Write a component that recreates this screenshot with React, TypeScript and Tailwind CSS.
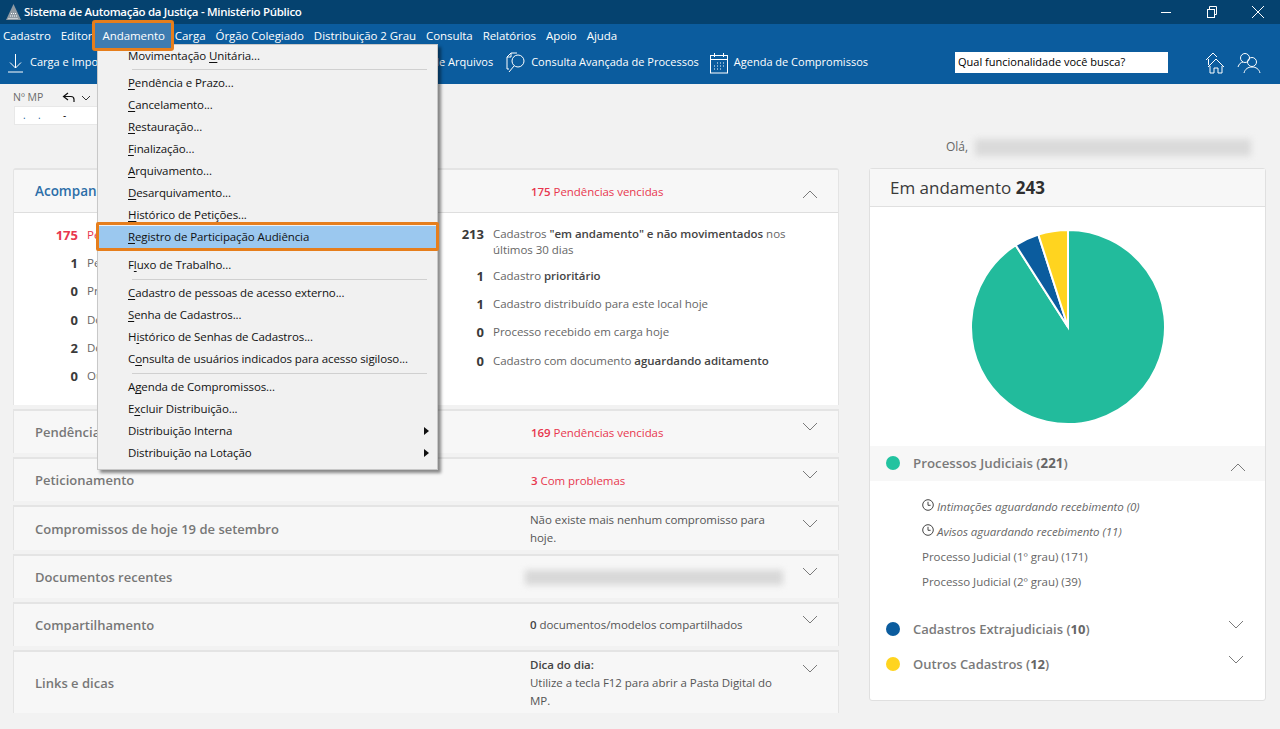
import React from "react";

const menu: (string | [string, string, string, boolean?])[] = [
  ["Movimentação ", "U", "nitária..."],
  "sep1",
  ["", "P", "endência e Prazo..."],
  ["", "C", "ancelamento..."],
  ["", "R", "estauração..."],
  ["", "F", "inalização..."],
  ["", "A", "rquivamento..."],
  ["", "D", "esarquivamento..."],
  ["", "H", "istórico de Petições..."],
  ["", "R", "egistro de Participação Audiência"],
  "gap",
  ["F", "l", "uxo de Trabalho..."],
  "sep",
  ["", "C", "adastro de pessoas de acesso externo..."],
  ["", "S", "enha de Cadastros..."],
  ["H", "i", "stórico de Senhas de Cadastros..."],
  ["C", "o", "nsulta de usuários indicados para acesso sigiloso..."],
  "sep",
  ["A", "g", "enda de Compromissos..."],
  ["E", "x", "cluir Distribuição..."],
  ["Distribuição Interna", "", "", true],
  ["Distribuição na Lotação", "", "", true],
];

const FONT = "font-['Open_Sans','Noto_Sans',sans-serif]";

function Chevron({ up = false, className = "" }: { up?: boolean; className?: string }) {
  return (
    <svg width="16" height="9" viewBox="0 0 16 9" fill="none" stroke="#7a7a7a" strokeWidth="1" className={className}>
      <polyline points={up ? "1,8 8,1 15,8" : "1,1 8,8 15,1"} />
    </svg>
  );
}

function CollapsedCard({ title, h, chevronTop, titleClass, children }: { title: string; h: string; chevronTop: string; titleClass: string; children: React.ReactNode }) {
  return (
    <div className={`${h} flex items-center bg-[#f7f7f7] border-x border-t-2 border-[#e4e4e4] pl-[21px]`}>
      <div className={`w-[495px] shrink-0 text-[13px] font-semibold text-[#777] ${titleClass}`}>{title}</div>
      <div className="w-[255px] shrink-0 text-[11.500px] tracking-[-0.05px] leading-[18px] text-[#555]">{children}</div>
      <Chevron className={`${chevronTop} self-start ml-[17px]`} />
    </div>
  );
}

function Stat({ n, red = false, h, children }: { n: string; red?: boolean; h: string; children: React.ReactNode }) {
  return (
    <div className={`${h} flex items-start`}>
      <div className={`w-[64px] shrink-0 text-right text-[13px] font-bold ${red ? "text-[#e8374f]" : "text-[#3a3a3a]"}`}>{n}</div>
      <div className={`ml-[9px] text-[11.500px] leading-[16px] pt-[1px] ${red ? "text-[#e8374f]" : "text-[#666]"}`}>{children}</div>
    </div>
  );
}

function StatR({ n, h, children }: { n: string; h: string; children: React.ReactNode }) {
  return (
    <div className={`${h} flex items-start`}>
      <div className="w-[35px] shrink-0 text-right text-[13px] font-bold text-[#3a3a3a]">{n}</div>
      <div className="ml-[9px] w-[305px] text-[11.500px] tracking-[-0.03px] leading-[16px] pt-[1px] text-[#666]">{children}</div>
    </div>
  );
}

function ClockIcon() {
  return (
    <svg width="12" height="12" viewBox="0 0 12 12" fill="none" stroke="#444" strokeWidth="1" className="shrink-0 -mt-[3px]">
      <circle cx="6" cy="6" r="5.300" />
      <polyline points="6,2.800 6,6.300 8.600,6.300" />
    </svg>
  );
}

function pieSlice(a0: number, a1: number) {
  const r = 97, cx = 100, cy = 100;
  const p = (a: number) => [cx + r * Math.sin((a * Math.PI) / 180), cy - r * Math.cos((a * Math.PI) / 180)];
  const [x0, y0] = p(a0);
  const [x1, y1] = p(a1);
  const large = a1 - a0 > 180 ? 1 : 0;
  return `M${cx},${cy} L${x0},${y0} A${r},${r} 0 ${large} 1 ${x1},${y1} Z`;
}

export default function App() {
  return (
    <div className={`relative h-[729px] w-[1280px] overflow-hidden bg-[#f2f2f2] ${FONT}`}>
      {/* Title bar */}
      <div className="flex h-[24px] items-center bg-[#05426f] pl-[6px] text-white">
        <svg width="15" height="16" viewBox="0 0 15 16">
          <polygon points="7.500,0 15,16 0,16" fill="#8f9aa3" />
          <path d="M2.500 14.500h10M4 12h7M5 9.500h5" stroke="#fff" strokeWidth="1.200" strokeDasharray="1 1" />
        </svg>
        <span className="ml-[3px] text-[11.500px] font-semibold tracking-[-0.3px]">Sistema de Automação da Justiça - Ministério Público</span>
        <div className="ml-auto flex items-center">
          <svg width="12" height="12" viewBox="0 0 12 12" stroke="#fff" fill="none" className="mr-[34px]"><path d="M1 6.500h10" /></svg>
          <svg width="12" height="12" viewBox="0 0 12 12" stroke="#fff" fill="none" className="mr-[33px]">
            <rect x="1.500" y="3.500" width="7" height="8" /><path d="M3.500 3.500V.5h7v8h-2" />
          </svg>
          <svg width="14" height="14" viewBox="0 0 14 14" stroke="#fff" fill="none" className="mr-[15px]"><path d="M1 1l12 12M13 1L1 13" /></svg>
        </div>
      </div>

      {/* Menu bar */}
      <div className="flex h-[24px] items-center gap-[10px] bg-[#0b5c9e] px-[3px] text-[11.500px] tracking-[-0.06px] text-white">
        <span>Cadastro</span>
        <span>Editor</span>
        <span className="relative z-30 mx-[-1px] px-[1px]">
          <span className="absolute -left-[9px] -right-[8px] -top-[7px] -bottom-[6px] rounded-[3px] border-[3px] border-[#e67e1c] bg-[#3e7cb1]" />
          <span className="relative">Andamento</span>
        </span>
        <span>Carga</span>
        <span>Órgão Colegiado</span>
        <span>Distribuição 2 Grau</span>
        <span>Consulta</span>
        <span>Relatórios</span>
        <span>Apoio</span>
        <span>Ajuda</span>
      </div>

      {/* Toolbar */}
      <div className="flex h-[36px] items-center bg-[#0b5c9e] pb-[7px] pl-[7px] text-[11px] text-white">
        <div className="flex w-[861px] items-center">
          <svg width="17" height="20" viewBox="0 0 17 20" stroke="#fff" fill="none" strokeWidth="1">
            <path d="M8.500 1v14M3 9.500l5.500 5.500 5.500-5.500M1 19h15" />
          </svg>
          <span className="ml-[6px]">Carga e Importação</span>
          <span className="ml-auto">Gestão de Arquivos</span>
          <svg width="22" height="24" viewBox="0 0 22 24" stroke="#fff" fill="none" strokeWidth="1" className="ml-[11px]">
            <path d="M3 18V6l4-4h6M3 18h2M7 2v4H3" />
            <circle cx="14" cy="10" r="6" />
            <path d="M10 15l-5 6" />
          </svg>
          <span className="ml-[5px]">Consulta Avançada de Processos</span>
          <svg width="20" height="22" viewBox="0 0 20 22" stroke="#fff" fill="none" strokeWidth="1" className="ml-[10px]">
            <rect x="1.500" y="3.500" width="17" height="17.500" />
            <path d="M1.500 7.500h17M5.500 1v4M14.500 1v4" />
            <path d="M8 11h1M11 11h1M14 11h1M5 14h1M8 14h1M11 14h1M14 14h1M5 17h1M8 17h1M11 17h1" />
          </svg>
          <span className="ml-[5px]">Agenda de Compromissos</span>
        </div>
        <div className="ml-[87px] flex h-[21px] w-[213px] items-center bg-white pl-[3px] text-[11px] text-black">Qual funcionalidade você busca?</div>
        <svg width="22" height="24" viewBox="0 0 22 24" stroke="#fff" fill="none" strokeWidth="1" className="ml-[37px]">
          <path d="M1 9l7-7 4 4M3.500 8v6" />
          <path d="M3 16l8-8 8 8M5 15v7h4v-5h4v5h4v-7" />
        </svg>
        <svg width="24" height="22" viewBox="0 0 24 22" stroke="#fff" fill="none" strokeWidth="1" className="ml-[10px]">
          <circle cx="8" cy="6" r="4.500" />
          <path d="M1 15c1-3 3-5 5-5" />
          <circle cx="15" cy="10" r="4.500" />
          <path d="M7 21c1-4 4-6 8-6s7 2 8 6" />
        </svg>
      </div>

      {/* Sub-toolbar */}
      <div className="relative h-[84px]">
        <div className="flex items-center pl-[13px] pt-[6px] text-[10.500px] text-[#6b6b6b]">
          <span className="w-[49px]">Nº MP</span>
          <svg width="14" height="12" viewBox="0 0 14 12" stroke="#111" fill="none" strokeWidth="1.200"><path d="M6 1L1.500 4.500 6 8M2 4.500h7c2 0 3 1.500 3 3v2.500" /></svg>
          <svg width="10" height="6" viewBox="0 0 10 6" stroke="#333" fill="none" className="ml-[5px]"><path d="M1 1l4 4 4-4" /></svg>
        </div>
        <div className="ml-[14px] flex h-[19px] w-[84px] items-center border border-[#e8e8e8] bg-white pl-[8px] text-[10px] leading-none text-[#1d5fa0]">
          <span className="w-[15px]">.</span><span className="w-[25px]">.</span><span className="text-black">-</span>
        </div>
      </div>

      {/* Greeting */}
      <div className="absolute left-[946px] top-[138px] flex items-center text-[12px] text-[#666]">
        <span>Olá,</span>
        <div className="ml-[7px] h-[17px] w-[276px] bg-[#dadada] blur-[3px]" />
      </div>

      {/* Content */}
      <div className="flex pl-[13px] items-start">
        <div className="w-[826px] flex flex-col gap-[4px]">
          {/* First card */}
          <div className="overflow-hidden rounded-t-[3px] border-x border-t-2 border-[#e4e4e4] bg-white">
            <div className="flex h-[43px] items-center border-b border-[#dedede] bg-[#f7f7f7] pl-[21px]">
              <div className="w-[495px] shrink-0 text-[13.500px] font-semibold text-[#2c6ea8]">Acompanhamento</div>
              <div className="w-[255px] shrink-0 pl-[1px] pt-[1px] text-[11.500px] tracking-[-0.05px] text-[#e8374f]"><b className="font-semibold">175</b> Pendências vencidas</div>
              <Chevron up className="ml-[17px] mt-[6px]" />
            </div>
            <div className="flex h-[192px] pt-[12px]">
              <div className="w-[435px] shrink-0 pt-[1px]">
                <Stat n="175" red h="h-[28px]">Pendências vencidas</Stat>
                <Stat n="1" h="h-[28px]">Pendência com prazo</Stat>
                <Stat n="0" h="h-[29px]">Processo em prazo</Stat>
                <Stat n="0" h="h-[28px]">Documento pendente</Stat>
                <Stat n="2" h="h-[28px]">Documento aguardando</Stat>
                <Stat n="0" h="h-[28px]">Outros</Stat>
              </div>
              <div>
                <StatR n="213" h="h-[42px]">Cadastros <b className="font-semibold text-[#444]">"em andamento" e não movimentados</b> nos últimos 30 dias</StatR>
                <StatR n="1" h="h-[28px]">Cadastro <b className="font-semibold text-[#444]">prioritário</b></StatR>
                <StatR n="1" h="h-[28px]">Cadastro distribuído para este local hoje</StatR>
                <StatR n="0" h="h-[29px]">Processo recebido em carga hoje</StatR>
                <StatR n="0" h="h-[28px]">Cadastro com documento <b className="font-semibold text-[#444]">aguardando aditamento</b></StatR>
              </div>
            </div>
          </div>

          <CollapsedCard title="Pendências" titleClass="pt-[1px]" h="h-[44px]" chevronTop="mt-[11px]">
            <span className="block pl-[1px] pt-[2px] text-[#e8374f]"><b className="font-semibold">169</b> Pendências vencidas</span>
          </CollapsedCard>
          <CollapsedCard title="Peticionamento" titleClass="pt-[2px]" h="h-[44px]" chevronTop="mt-[11px]">
            <span className="block pl-[1px] pt-[2px] text-[#e8374f]"><b className="font-semibold">3</b> Com problemas</span>
          </CollapsedCard>
          <CollapsedCard title="Compromissos de hoje 19 de setembro" titleClass="pt-[3px]" h="h-[45px]" chevronTop="mt-[12px]">
            Não existe mais nenhum compromisso para hoje.
          </CollapsedCard>
          <CollapsedCard title="Documentos recentes" titleClass="pt-[2px]" h="h-[44px]" chevronTop="mt-[11px]">
            <div className="h-[15px] w-[258px] -ml-[5px] bg-[#d8d8d8] blur-[3px]" />
          </CollapsedCard>
          <CollapsedCard title="Compartilhamento" titleClass="pt-[2px]" h="h-[44px]" chevronTop="mt-[11px]">
            <b className="font-semibold text-[#444]">0</b> documentos/modelos compartilhados
          </CollapsedCard>
          <CollapsedCard title="Links e dicas" titleClass="pt-[3px]" h="h-[63px]" chevronTop="mt-[12px]">
            <b className="block font-semibold text-[#444]">Dica do dia:</b>
            Utilize a tecla F12 para abrir a Pasta Digital do MP.
          </CollapsedCard>
        </div>

        {/* Right card */}
        <div className="ml-[30px] h-[533px] w-[397px] rounded-[3px] border border-[#e0e0e0] bg-white">
          <div className="flex h-[38px] items-center border-b border-[#e0e0e0] bg-[#f7f7f7] pl-[20px] text-[17px] text-[#3a3a3a]">
            Em andamento&nbsp;<b className="font-bold text-[#2f2f2f]">243</b>
          </div>
          <div className="flex h-[239px] justify-center pt-[20px]">
            <svg width="200" height="200" viewBox="0 0 200 200">
              <path d={pieSlice(0, 327.4)} fill="#22bb9c" stroke="#fff" strokeWidth="2" />
              <path d={pieSlice(327.4, 342.2)} fill="#0b5c9e" stroke="#fff" strokeWidth="2" />
              <path d={pieSlice(342.2, 360)} fill="#ffd41f" stroke="#fff" strokeWidth="2" />
            </svg>
          </div>
          <div className="flex h-[35px] items-center bg-[#f7f7f7] pl-[16px] pr-[19px]">
            <span className="-mt-[1px] h-[14px] w-[14px] rounded-full bg-[#22c3a0]" />
            <span className="ml-[13px] pt-[1px] text-[13.300px] font-semibold text-[#7a7a7a]">Processos Judiciais (<b className="font-bold text-[#666]">221</b>)</span>
            <Chevron up className="ml-auto mt-[8px]" />
          </div>
          <div className="h-[131px] pl-[52px] pt-[13px] text-[11.500px] tracking-[-0.03px] text-[#666]">
            <div className="flex h-[25px] items-center gap-[3px] italic"><ClockIcon />Intimações aguardando recebimento (0)</div>
            <div className="flex h-[25px] items-center gap-[3px] italic"><ClockIcon />Avisos aguardando recebimento (11)</div>
            <div className="flex h-[25px] items-center">Processo Judicial (1º grau) (171)</div>
            <div className="flex h-[25px] items-center">Processo Judicial (2º grau) (39)</div>
          </div>
          <div className="flex h-[35px] items-center pl-[16px] pr-[21px]">
            <span className="-mt-[1px] h-[14px] w-[14px] rounded-full bg-[#0b5c9e]" />
            <span className="ml-[13px] text-[13px] font-semibold text-[#7a7a7a]">Cadastros Extrajudiciais (<b className="font-bold text-[#666]">10</b>)</span>
            <Chevron className="ml-auto -mt-[10px]" />
          </div>
          <div className="flex h-[35px] items-center pl-[16px] pr-[21px]">
            <span className="-mt-[1px] h-[14px] w-[14px] rounded-full bg-[#ffd41f]" />
            <span className="ml-[13px] text-[13px] font-semibold text-[#7a7a7a]">Outros Cadastros (<b className="font-bold text-[#666]">12</b>)</span>
            <Chevron className="ml-auto -mt-[10px]" />
          </div>
        </div>
      </div>

      {/* Dropdown menu */}
      <div className="absolute left-[97px] top-[44px] z-20 w-[341px] border border-[#c8c8c8] bg-[#f1f1f1] pb-[5px] shadow-[3px_3px_3px_rgba(0,0,0,0.45)]">
        {menu.map((m, i) => {
          if (m === "sep1") return <div key={i} className="ml-[34px] mr-[10px] h-[5px] pt-[2px]"><div className="h-px bg-[#d0d0d0]" /></div>;
          if (m === "sep") return <div key={i} className="ml-[34px] mr-[10px] h-[6px] pt-[3px]"><div className="h-px bg-[#d0d0d0]" /></div>;
          if (m === "gap") return <div key={i} className="h-[6px]" />;
          const [a, k, b, arrow] = m as [string, string, string, boolean?];
          const hi = b.startsWith("egistro");
          return (
            <div key={i} className={`relative flex h-[22px] items-center pl-[30px] text-[11.500px] tracking-[-0.1px] text-[#111] ${hi ? "bg-[#9bc8ef]" : ""}`}>
              {hi && <span className="absolute -left-[2px] -right-[2px] -top-[4px] -bottom-[3px] rounded-[2px] border-[3px] border-[#e67e1c]" />}
              <span className="relative">{a}{k && <u className="underline underline-offset-2">{k}</u>}{b}</span>
              {arrow && <svg width="5" height="8" viewBox="0 0 5 8" className="absolute right-[8px]"><polygon points="0,0 5,4 0,8" fill="#111" /></svg>}
            </div>
          );
        })}
      </div>
    </div>
  );
}
